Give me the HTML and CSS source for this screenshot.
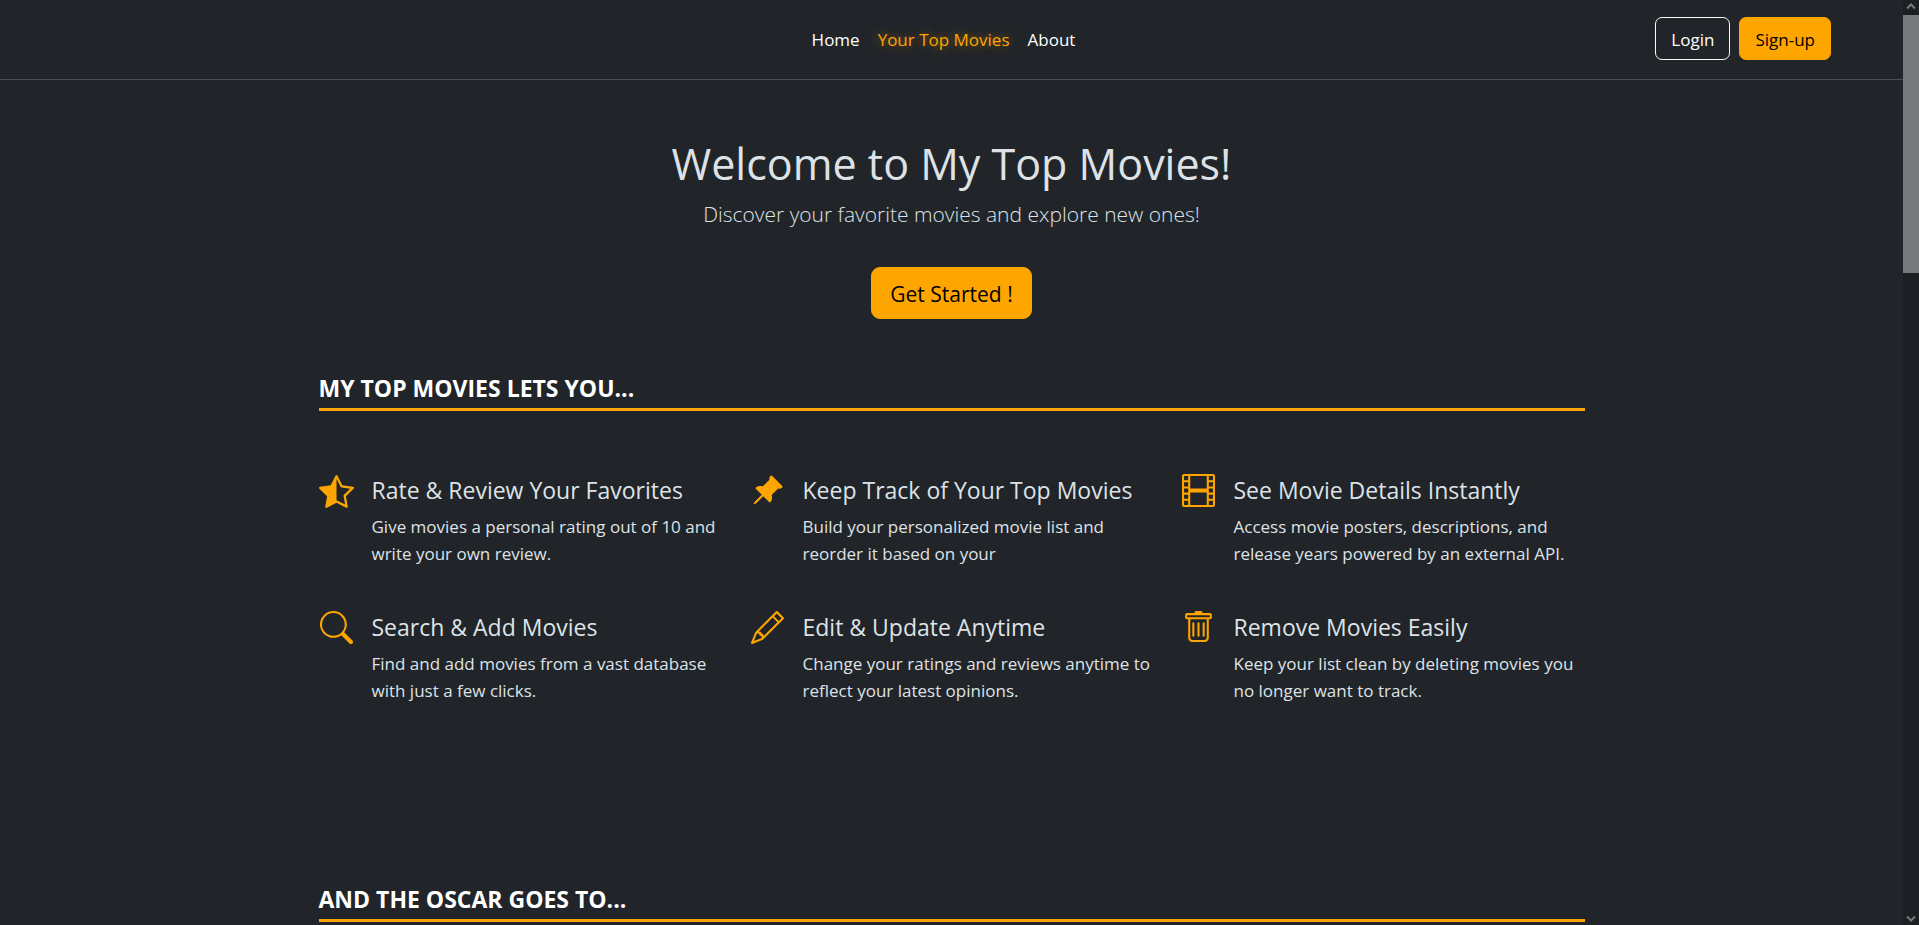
FILE: index.html
```html
<!DOCTYPE html>
<html lang="en">
<head>
<meta charset="utf-8">
<meta name="viewport" content="width=device-width, initial-scale=1">
<title>My Top Movies</title>
<link rel="stylesheet" href="styles.css">
</head>
<body>
<div class="page">
  <header class="site-header">
    <nav class="nav" aria-label="Main">
      <a class="nav-link" href="#home">Home</a>
      <a class="nav-link active" href="#top">Your Top Movies</a>
      <a class="nav-link" href="#about">About</a>
    </nav>
    <div class="account">
      <button type="button" class="btn btn-outline">Login</button>
      <button type="button" class="btn btn-primary">Sign-up</button>
    </div>
  </header>

  <main>
    <section class="hero">
      <h1 class="hero-title">Welcome to My Top Movies!</h1>
      <p class="hero-lead">Discover your favorite movies and explore new ones!</p>
      <button type="button" class="btn btn-primary btn-large">Get Started !</button>
    </section>

    <section class="container features">
      <h2 class="section-title">MY TOP MOVIES LETS YOU...</h2>
      <div class="feature-grid">
        <article class="feature">
          <svg class="icon icon-star" viewBox="0 0 16 16" aria-hidden="true"><path d="M5.354 5.119 7.538.792A.52.52 0 0 1 8 .5c.183 0 .366.097.465.292l2.184 4.327 4.898.696A.54.54 0 0 1 16 6.32a.55.55 0 0 1-.17.445l-3.523 3.356.83 4.73c.078.443-.36.79-.746.592L8 13.187l-4.389 2.256a.5.5 0 0 1-.146.05c-.342.06-.668-.254-.6-.642l.83-4.73L.173 6.765a.55.55 0 0 1-.172-.403.6.6 0 0 1 .085-.302.51.51 0 0 1 .37-.245zM8 12.027a.5.5 0 0 1 .232.056l3.686 1.894-.694-3.957a.56.56 0 0 1 .162-.505l2.907-2.77-4.052-.576a.53.53 0 0 1-.393-.288L8.001 2.223 8 2.226z"/></svg>
          <div>
            <h3 class="feature-title">Rate &amp; Review Your Favorites</h3>
            <p class="feature-text">Give movies a personal rating out of 10 and write your own review.</p>
          </div>
        </article>
        <article class="feature">
          <svg class="icon" viewBox="0 0 16 16" aria-hidden="true"><path d="M9.828.722a.5.5 0 0 1 .354.146l4.95 4.95a.5.5 0 0 1 0 .707c-.48.48-1.072.588-1.503.588-.177 0-.335-.018-.46-.039l-3.134 3.134a6 6 0 0 1 .16 1.013c.046.702-.032 1.687-.72 2.375a.5.5 0 0 1-.707 0l-2.829-2.828-3.182 3.182c-.195.195-1.219.902-1.414.707s.512-1.22.707-1.414l3.182-3.182-2.828-2.829a.5.5 0 0 1 0-.707c.688-.688 1.673-.767 2.375-.72a6 6 0 0 1 1.013.16l3.134-3.133a3 3 0 0 1-.04-.461c0-.43.108-1.022.589-1.503a.5.5 0 0 1 .353-.146"/></svg>
          <div>
            <h3 class="feature-title">Keep Track of Your Top Movies</h3>
            <p class="feature-text">Build your personalized movie list and reorder it based on your</p>
          </div>
        </article>
        <article class="feature">
          <svg class="icon" viewBox="0 0 16 16" aria-hidden="true"><path d="M0 1a1 1 0 0 1 1-1h14a1 1 0 0 1 1 1v14a1 1 0 0 1-1 1H1a1 1 0 0 1-1-1zm4 0v6h8V1zm8 8H4v6h8zM1 1v2h2V1zm2 3H1v2h2zM1 7v2h2V7zm2 3H1v2h2zm-2 3v2h2v-2zM15 1h-2v2h2zm-2 3v2h2V4zm2 3h-2v2h2zm-2 3v2h2v-2zm2 3h-2v2h2z"/></svg>
          <div>
            <h3 class="feature-title">See Movie Details Instantly</h3>
            <p class="feature-text">Access movie posters, descriptions, and release years powered by an external API.</p>
          </div>
        </article>
        <article class="feature">
          <svg class="icon" viewBox="0 0 16 16" aria-hidden="true"><path d="M11.742 10.344a6.5 6.5 0 1 0-1.397 1.398h-.001q.044.06.098.115l3.85 3.85a1 1 0 0 0 1.415-1.414l-3.85-3.85a1 1 0 0 0-.115-.1zM12 6.5a5.5 5.5 0 1 1-11 0 5.5 5.5 0 0 1 11 0"/></svg>
          <div>
            <h3 class="feature-title">Search &amp; Add Movies</h3>
            <p class="feature-text">Find and add movies from a vast database with just a few clicks.</p>
          </div>
        </article>
        <article class="feature">
          <svg class="icon" viewBox="0 0 16 16" aria-hidden="true"><path d="M12.146.146a.5.5 0 0 1 .708 0l3 3a.5.5 0 0 1 0 .708l-10 10a.5.5 0 0 1-.168.11l-5 2a.5.5 0 0 1-.65-.65l2-5a.5.5 0 0 1 .11-.168zM11.207 2.5 13.5 4.793 14.793 3.5 12.5 1.207zm1.586 3L10.5 3.207 4 9.707V10h.5a.5.5 0 0 1 .5.5v.5h.5a.5.5 0 0 1 .5.5v.5h.293zm-9.761 5.175-.106.106-1.528 3.821 3.821-1.528.106-.106A.5.5 0 0 1 5 12.5V12h-.5a.5.5 0 0 1-.5-.5V11h-.5a.5.5 0 0 1-.468-.325"/></svg>
          <div>
            <h3 class="feature-title">Edit &amp; Update Anytime</h3>
            <p class="feature-text">Change your ratings and reviews anytime to reflect your latest opinions.</p>
          </div>
        </article>
        <article class="feature">
          <svg class="icon" viewBox="0 0 16 16" aria-hidden="true"><path d="M5.5 5.5A.5.5 0 0 1 6 6v6a.5.5 0 0 1-1 0V6a.5.5 0 0 1 .5-.5m2.5 0a.5.5 0 0 1 .5.5v6a.5.5 0 0 1-1 0V6a.5.5 0 0 1 .5-.5m3 .5a.5.5 0 0 0-1 0v6a.5.5 0 0 0 1 0z"/><path d="M14.5 3a1 1 0 0 1-1 1H13v9a2 2 0 0 1-2 2H5a2 2 0 0 1-2-2V4h-.5a1 1 0 0 1-1-1V2a1 1 0 0 1 1-1H6a1 1 0 0 1 1-1h2a1 1 0 0 1 1 1h3.5a1 1 0 0 1 1 1zM4.118 4 4 4.059V13a1 1 0 0 0 1 1h6a1 1 0 0 0 1-1V4.059L11.882 4zM2.500 3h11V2h-11z"/></svg>
          <div>
            <h3 class="feature-title">Remove Movies Easily</h3>
            <p class="feature-text">Keep your list clean by deleting movies you no longer want to track.</p>
          </div>
        </article>
      </div>
    </section>

    <section class="container">
      <h2 class="section-title">AND THE OSCAR GOES TO...</h2>
    </section>
  </main>
</div>

<div class="scrollbar" aria-hidden="true">
  <svg class="arrow" viewBox="0 0 16 15"><path d="M4 8.500 8 4.500 12 8.500"/></svg>
  <div class="track"><div class="thumb"></div></div>
  <svg class="arrow" viewBox="0 0 16 15"><path d="M4 6.500 8 10.500 12 6.500"/></svg>
</div>
</body>
</html>
```

FILE: styles.css
```css
:root {
  --bg: #212529;
  --text: #dee2e6;
  --accent: #ffa500;
}

* {
  box-sizing: border-box;
}

body {
  display: grid;
  grid-template-columns: minmax(0, 1fr) 16px;
  height: 100vh;
  margin: 0;
  overflow: hidden;
  background: var(--bg);
  color: var(--text);
  font-family: "Segoe UI", "Open Sans", "Noto Sans", sans-serif;
  font-size: 17px;
  line-height: 27px;
}

h1, h2, h3, p {
  margin: 0;
}

.page {
  min-width: 0;
  overflow: hidden;
}

.site-header {
  display: grid;
  grid-template-columns: 1fr auto 1fr;
  align-items: center;
  padding: 17px 72px 19px 56px;
  border-bottom: 1px solid #495057;
}

.nav {
  display: flex;
  grid-column: 2;
}

.nav-link {
  padding: 9px 9px 7px;
  color: #fff;
  text-decoration: none;
}

.nav-link.active {
  color: var(--accent);
  text-shadow: 0 0 10px rgba(255, 165, 0, 0.5);
}

.account {
  display: flex;
  justify-content: flex-end;
  gap: 9px;
}

.btn {
  padding: 8px 15px 6px;
  border: 1px solid var(--accent);
  border-radius: 7px;
  font: inherit;
  cursor: pointer;
}

.btn-outline {
  border-color: #f8f9fa;
  background: transparent;
  color: #fff;
}

.btn-primary {
  background: var(--accent);
  color: #000;
}

.btn-large {
  padding: 9px 18px 7px;
  border-radius: 9px;
  font-size: 21px;
  line-height: 34px;
}

.hero {
  display: flex;
  flex-direction: column;
  align-items: center;
  padding: 57px 27px 0;
  text-align: center;
}

.hero-title {
  font-size: 43px;
  font-weight: 400;
  line-height: 54px;
}

.hero-lead {
  margin: 6px 0 36px;
  font-size: 21px;
  font-weight: 300;
  line-height: 34px;
}

.container {
  width: 100%;
  max-width: 1320px;
  margin: 0 auto;
  padding: 54px 27px 0;
}

.section-title {
  padding-bottom: 4px;
  border-bottom: 3px solid var(--accent);
  color: #fff;
  font-size: 23px;
  font-weight: 700;
  line-height: 31px;
}

.features {
  padding-bottom: 130px;
}

.feature-grid {
  display: grid;
  grid-template-columns: repeat(auto-fit, minmax(360px, 1fr));
  gap: 44px 27px;
  padding-top: 63px;
}

.feature {
  display: flex;
  align-items: flex-start;
  gap: 18px;
}

.icon {
  flex: none;
  width: 35px;
  height: 33px;
  fill: var(--accent);
}

.icon-star {
  height: 35px;
}

.feature-title {
  margin-bottom: 6px;
  font-size: 23px;
  font-weight: 400;
  line-height: 33px;
}

.features + .container {
  padding-top: 50px;
}

.scrollbar {
  display: flex;
  flex-direction: column;
  background: #1c2024;
}

.arrow {
  flex: none;
  height: 15px;
  fill: none;
  stroke: #77787b;
  stroke-width: 2;
}

.track {
  flex: 1;
}

.thumb {
  height: 258px;
  background: #77787b;
}
```
